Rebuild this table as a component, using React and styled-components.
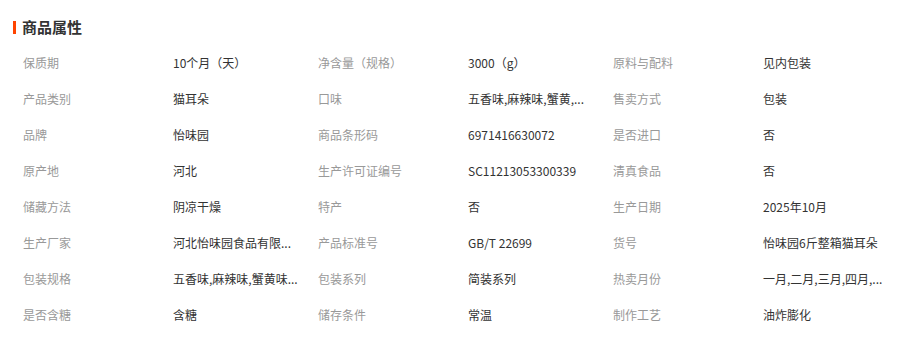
import React from "react";
import styled, { createGlobalStyle } from "styled-components";

const Global = createGlobalStyle`
  html, body { margin: 0; padding: 0; background: #fff; }
  body { font-family: "Microsoft YaHei", "Noto Sans CJK SC", "Noto Sans", sans-serif; }
`;

const Panel = styled.section`
  width: 914px;
  padding-top: 18px;
  box-sizing: border-box;
`;

const Title = styled.h3`
  margin: 0 0 8px 13px;
  display: flex;
  align-items: center;
  gap: 6px;
  font-size: 15px;
  line-height: 18px;
  font-weight: bold;
  color: #333;
  &::before {
    content: "";
    width: 3px;
    height: 13px;
    background: #ff4400;
  }
`;

const Grid = styled.div`
  display: grid;
  grid-template-columns: repeat(3, 150px 145px);
  grid-auto-rows: 36px;
  padding-left: 23px;
  font-size: 12px;
`;

const Cell = styled.div`
  display: flex;
  align-items: center;
  min-width: 0;
  white-space: nowrap;
`;

const Label = styled(Cell)`
  color: #999;
`;

const Value = styled(Cell)`
  color: #333;
`;

const rows = [
  ["保质期", "10个月（天）", "净含量（规格）", "3000（g）", "原料与配料", "见内包装"],
  ["产品类别", "猫耳朵", "口味", "五香味,麻辣味,蟹黄,...", "售卖方式", "包装"],
  ["品牌", "怡味园", "商品条形码", "6971416630072", "是否进口", "否"],
  ["原产地", "河北", "生产许可证编号", "SC11213053300339", "清真食品", "否"],
  ["储藏方法", "阴凉干燥", "特产", "否", "生产日期", "2025年10月"],
  ["生产厂家", "河北怡味园食品有限...", "产品标准号", "GB/T 22699", "货号", "怡味园6斤整箱猫耳朵"],
  ["包装规格", "五香味,麻辣味,蟹黄味...", "包装系列", "简装系列", "热卖月份", "一月,二月,三月,四月,..."],
  ["是否含糖", "含糖", "储存条件", "常温", "制作工艺", "油炸膨化"],
];

export default function App() {
  return (
    <>
      <Global />
      <Panel>
        <Title>商品属性</Title>
        <Grid>
          {rows.map((r, i) =>
            [0, 2, 4].map((k) => (
              <React.Fragment key={`${i}-${k}`}>
                <Label>{r[k]}</Label>
                <Value>{r[k + 1]}</Value>
              </React.Fragment>
            ))
          )}
        </Grid>
      </Panel>
    </>
  );
}
